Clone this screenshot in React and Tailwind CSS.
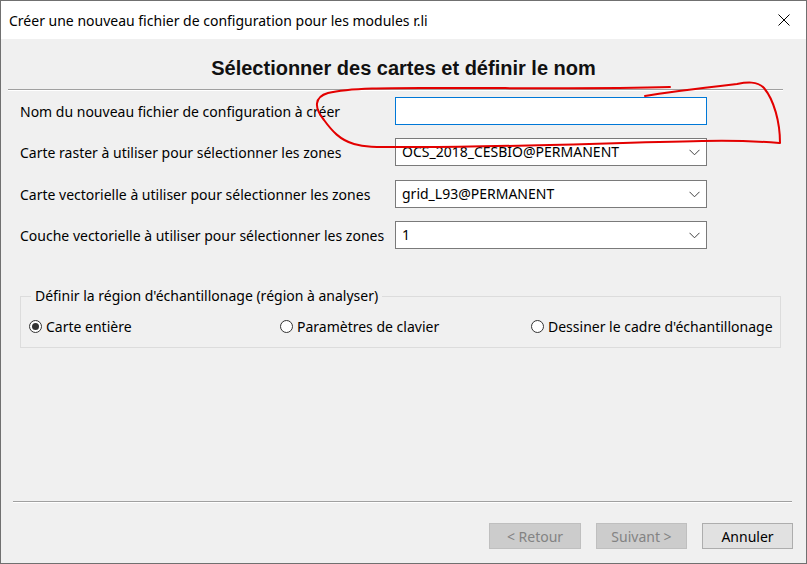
import React from "react";

const ui = { fontFamily: '"Noto Sans", "Open Sans", sans-serif' };

function Chevron() {
  return (
    <svg width="11" height="7" viewBox="0 0 11 7" className="shrink-0">
      <path d="M0.5 0.8 L5.5 5.8 L10.5 0.8" fill="none" stroke="#404040" strokeWidth="1" />
    </svg>
  );
}

function Combo({ value }) {
  return (
    <div className="w-[312px] shrink-0 h-[28px] bg-white border border-[#7a7a7a] flex items-center pl-[6px] pr-[6px]">
      <span className="flex-1 text-[14px] text-[#000] leading-none">{value}</span>
      <Chevron />
    </div>
  );
}

function Row({ label, children, mt }) {
  return (
    <div className={`flex items-center ${mt}`}>
      <div className="w-[394px] shrink-0 pl-[19px] text-[14px] text-black whitespace-nowrap">{label}</div>
      {children}
    </div>
  );
}

function Radio({ checked, label }) {
  return (
    <div className="flex items-center gap-[4px]">
      <div className="w-[13px] h-[13px] rounded-full border border-[#333] bg-white flex items-center justify-center">
        {checked && <div className="w-[7px] h-[7px] rounded-full bg-[#333]" />}
      </div>
      <span className="text-[14px] text-black">{label}</span>
    </div>
  );
}

export default function App() {
  return (
    <div className="w-[807px] h-[564px] relative overflow-hidden border border-[#707070] bg-[#f0f0f0] flex flex-col" style={ui}>
      {/* Title bar */}
      <div className="h-[38px] bg-white flex items-center justify-between pl-[8px] pr-[16px] shrink-0">
        <span className="text-[14px] text-black">Créer une nouveau fichier de configuration pour les modules r.li</span>
        <svg width="12" height="12" viewBox="0 0 12 12">
          <path d="M0.5 0.5 L11.5 11.5 M11.5 0.5 L0.5 11.5" stroke="#000" strokeWidth="1" />
        </svg>
      </div>

      {/* Heading */}
      <div className="pt-[18px] h-[50px] flex justify-center">
        <span className="text-[20px] font-bold leading-[23px] text-[#111]" style={{ fontFamily: '"Liberation Sans", Arial, sans-serif' }}>
          Sélectionner des cartes et définir le nom
        </span>
      </div>
      <div className="ml-[7px] w-[775px] h-[2px] border-t border-[#a0a0a0] border-b border-b-white" />

      {/* Rows */}
      <Row label="Nom du nouveau fichier de configuration à créer" mt="mt-[6px]">
        <div className="w-[312px] shrink-0 h-[28px] bg-white border border-[#0078d7]" />
      </Row>
      <Row label="Carte raster à utiliser pour sélectionner les zones" mt="mt-[13px]">
        <Combo value="OCS_2018_CESBIO@PERMANENT" />
      </Row>
      <Row label="Carte vectorielle à utiliser pour sélectionner les zones" mt="mt-[14px]">
        <Combo value="grid_L93@PERMANENT" />
      </Row>
      <Row label="Couche vectorielle à utiliser pour sélectionner les zones" mt="mt-[13px]">
        <Combo value="1" />
      </Row>

      {/* Group box */}
      <div className="ml-[19px] w-[761px] mt-[47px] h-[52px] border border-[#dcdcdc] relative">
        <div className="absolute left-[10px] top-[-11px] px-[4px] bg-[#f0f0f0] text-[14px] leading-[20px] text-black">
          Définir la région d'échantillonage (région à analyser)
        </div>
        <div className="flex items-center h-full pt-[8px] pl-[8px]">
          <div className="w-[251px]"><Radio checked label="Carte entière" /></div>
          <div className="w-[251px]"><Radio label="Paramètres de clavier" /></div>
          <div><Radio label="Dessiner le cadre d'échantillonage" /></div>
        </div>
      </div>

      <div className="flex-1" />

      {/* Bottom separator */}
      <div className="ml-[12px] w-[779px] h-[2px] border-t border-[#a0a0a0] border-b border-b-white" />

      {/* Buttons */}
      <div className="flex justify-end gap-[15px] pr-[13px] mt-[20px] mb-[14px]">
        <div className="w-[92px] h-[26px] bg-[#cccccc] border border-[#bfbfbf] flex items-center justify-center text-[14px] text-[#838383]">&lt; Retour</div>
        <div className="w-[91px] h-[26px] bg-[#cccccc] border border-[#bfbfbf] flex items-center justify-center text-[14px] text-[#838383]">Suivant &gt;</div>
        <div className="w-[91px] h-[26px] bg-[#e1e1e1] border border-[#adadad] flex items-center justify-center text-[14px] text-black">Annuler</div>
      </div>

      {/* Red freehand annotation */}
      <svg className="absolute left-0 top-0 pointer-events-none" width="807" height="564" viewBox="-1 -1 807 564">
        <path
          d="M668,85 C600,87 520,86 450,86 C400,86 350,85 326,91 C312,95 312,106 322,118 C330,129 338,138 352,142 C365,146 380,145 400,145 C480,146 600,141 700,139 C740,138 765,140 778,141 C778,120 772,98 762,86 C755,79 745,80 735,82 C700,86 665,90 643,94"
          fill="none"
          stroke="#e30000"
          strokeWidth="2"
          strokeLinecap="round"
          strokeLinejoin="round"
        />
      </svg>
    </div>
  );
}
